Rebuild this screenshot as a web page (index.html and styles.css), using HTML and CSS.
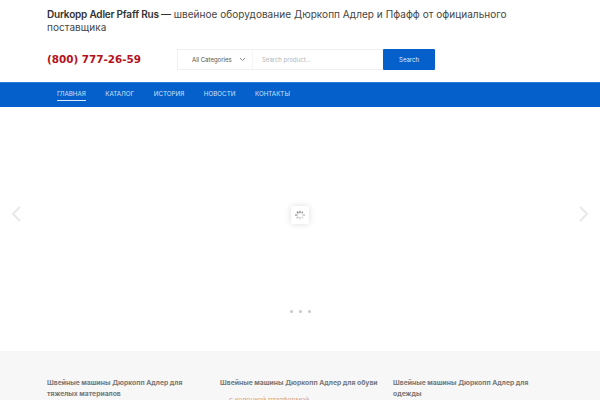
FILE: index.html
```html
<!DOCTYPE html>
<html lang="ru">
<head>
<meta charset="utf-8">
<title>Durkopp Adler Pfaff Rus</title>
<link rel="stylesheet" href="styles.css">
</head>
<body>
<header class="header">
  <p class="tagline"><strong>Durkopp Adler Pfaff Rus —</strong> швейное оборудование Дюркопп Адлер и Пфафф от официального поставщика</p>
  <div class="header-row">
    <a class="phone">(800) 777-26-59</a>
    <form class="search">
      <div class="cat">All Categories
        <svg class="chev" width="7" height="5" viewBox="0 0 7 5"><path d="M1 1l2.5 2.5L6 1" fill="none" stroke="#888" stroke-width="1"/></svg>
      </div>
      <div class="query">Search product...</div>
      <div class="btn">Search</div>
    </form>
  </div>
</header>
<nav class="nav">
  <a class="nav-item active">ГЛАВНАЯ</a>
  <a class="nav-item">КАТАЛОГ</a>
  <a class="nav-item">ИСТОРИЯ</a>
  <a class="nav-item">НОВОСТИ</a>
  <a class="nav-item">КОНТАКТЫ</a>
</nav>
<section class="slider">
  <svg class="arrow arrow-l" width="12" height="16" viewBox="0 0 12 16"><path d="M10 1L3 8l7 7" fill="none" stroke="#e8e8e8" stroke-width="2"/></svg>
  <div class="loader">
    <svg width="12" height="10" viewBox="0 0 14 12"><g fill="none" stroke-width="1.6"><path d="M7 1v3" stroke="#888"/><path d="M10.5 2L9 4" stroke="#999"/><path d="M13 6h-3" stroke="#bbb"/><path d="M3.5 2L5 4" stroke="#777"/><path d="M1 6h3" stroke="#999"/><path d="M3 10l2-2" stroke="#bbb"/><path d="M11 10L9 8" stroke="#ddd"/><path d="M7 11V8" stroke="#ccc"/></g></svg>
  </div>
  <svg class="arrow arrow-r" width="12" height="16" viewBox="0 0 12 16"><path d="M2 1l7 7-7 7" fill="none" stroke="#e8e8e8" stroke-width="2"/></svg>
  <div class="dots"><i></i><i></i><i></i></div>
</section>
<section class="footer-cols">
  <div class="col"><h4>Швейные машины Дюркопп Адлер для тяжелых материалов</h4></div>
  <div class="col"><h4>Швейные машины Дюркопп Адлер для обуви</h4><p class="link">с колонкой платформой</p></div>
  <div class="col"><h4>Швейные машины Дюркопп Адлер для одежды</h4></div>
</section>
</body>
</html>
```
FILE: styles.css
```css
* { box-sizing: border-box; }
html, body { margin: 0; height: 400px; overflow: hidden; }
body { font-family: Inter, "Noto Sans", sans-serif; background: #fff; color: #333; }
.header { height: 82px; padding: 8px 47px 0; }
.tagline { margin: 0; width: 470px; font-size: 10px; line-height: 13px; letter-spacing: .05px; color: #444; }
.tagline strong { font-weight: 600; color: #333; letter-spacing: -.2px; }
.header-row { display: flex; align-items: center; margin-top: 15px; }
.phone { width: 130px; font: bold 10.4px "DejaVu Sans", sans-serif; color: #b5101c; margin-top: -2px; }
.search { display: flex; height: 21px; font-size: 6px; }
.cat { width: 75px; display: flex; align-items: center; gap: 7px; padding-left: 14px; border: 1px solid #f0f0f0; border-right: 0; color: #555; white-space: nowrap; }
.query { width: 131px; display: flex; align-items: center; padding-left: 9px; border: 1px solid #f0f0f0; border-left: 1px solid #f5f5f5; border-right: 0; color: #b5b5b5; }
.btn { width: 52px; display: flex; align-items: center; justify-content: center; background: #0560cc; color: #dfeaf8; border-radius: 1px; }
.nav { height: 25px; background: #0560cc; display: flex; padding-left: 57px; gap: 19.5px; align-items: center; border-top: 1px solid #2b7bd8; }
.nav-item { font-size: 6.25px; color: #cfe0f5; line-height: 11px; border-bottom: 1px solid transparent; }
.nav-item.active { border-bottom-color: #dfeaf8; }
.slider { position: relative; height: 244px; background: #fff; }
.loader { position: absolute; left: 291px; top: 99px; width: 18px; height: 18px; display: flex; align-items: center; justify-content: center; background: #fff; box-shadow: 0 0 6px rgba(0,0,0,.14); }
.arrow { position: absolute; top: 99px; }
.arrow-l { left: 10px; }
.arrow-r { right: 10px; }
.dots { position: absolute; left: 290px; top: 203px; display: flex; gap: 6px; }
.dots i { width: 3px; height: 3px; border-radius: 50%; background: #c8c8c8; }
.footer-cols { background: #f7f7f7; height: 49px; padding: 26px 47px 0; display: flex; }
.col { width: 173px; flex: none; }
.col h4 { margin: 0; width: 140px; font-size: 6.8px; font-weight: 700; line-height: 11px; color: #777; }
.col:nth-child(2) h4 { width: 165px; }
.link { margin: 7px 0 0 9px; font-size: 6.8px; line-height: 9px; color: #d9a07e; white-space: nowrap; }
```
